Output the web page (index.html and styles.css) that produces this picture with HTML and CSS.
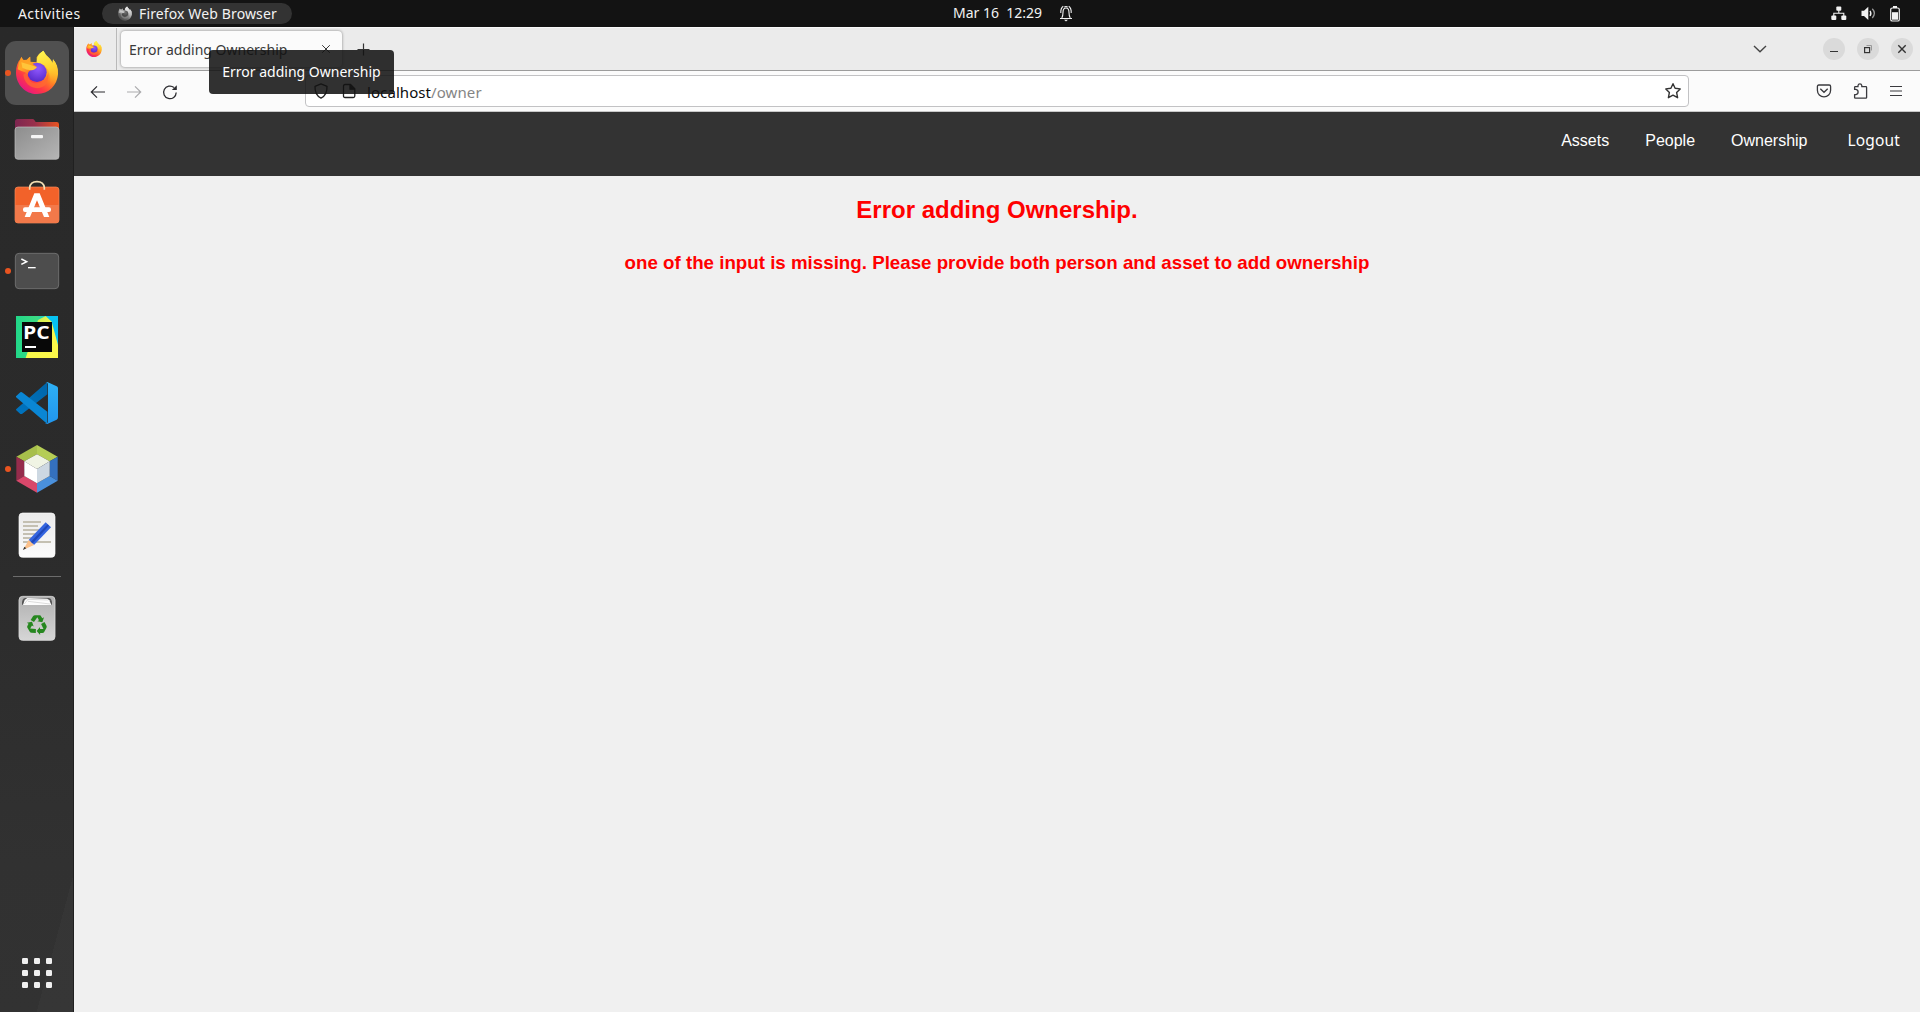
FILE: index.html
```html
<!DOCTYPE html>
<html lang="en">
<head>
<meta charset="utf-8">
<title>Error adding Ownership</title>
<link rel="stylesheet" href="styles.css">
</head>
<body>
<svg class="defs" width="0" height="0" aria-hidden="true">
  <defs>
    <linearGradient id="ffBody" x1="0.85" y1="0.05" x2="0.2" y2="0.95"><stop offset="0" stop-color="#fff44f"/><stop offset=".3" stop-color="#ffc02a"/><stop offset=".52" stop-color="#ff7a25"/><stop offset=".75" stop-color="#ff3647"/><stop offset="1" stop-color="#e31587"/></linearGradient>
    <linearGradient id="ffTail" x1="0.4" y1="0" x2="0.6" y2="1"><stop offset="0" stop-color="#fff44f"/><stop offset=".5" stop-color="#ffd130"/><stop offset="1" stop-color="#ff9a22" stop-opacity="0"/></linearGradient>
    <radialGradient id="ffGlobe" cx=".55" cy=".3" r=".7"><stop offset="0" stop-color="#9059ff"/><stop offset=".5" stop-color="#7542e5"/><stop offset="1" stop-color="#592acb"/></radialGradient>
    <linearGradient id="ffHead" x1="0" y1="0" x2="0.6" y2="1"><stop offset="0" stop-color="#ff9a22"/><stop offset=".6" stop-color="#ffa624"/><stop offset="1" stop-color="#ff6a2a"/></linearGradient>
    <linearGradient id="folderBack" x1="0" y1="0" x2="1" y2="0"><stop offset="0" stop-color="#7d2650"/><stop offset=".45" stop-color="#99304b"/><stop offset="1" stop-color="#e95420"/></linearGradient>
    <linearGradient id="folderFront" x1="0" y1="0" x2="1" y2="1"><stop offset="0" stop-color="#8d8d8d"/><stop offset="1" stop-color="#b5b5b5"/></linearGradient>
    <linearGradient id="pcBg" x1="0" y1="0" x2="1" y2="0"><stop offset="0" stop-color="#21d789"/><stop offset=".5" stop-color="#3ddc83"/><stop offset=".75" stop-color="#07c3f2"/></linearGradient>
    <linearGradient id="pcYellow" x1="0" y1="0" x2="1" y2="1"><stop offset="0" stop-color="#a8e75e"/><stop offset=".5" stop-color="#f7f84a"/><stop offset="1" stop-color="#fcf84a"/></linearGradient>
    <linearGradient id="codeUp" x1="0" y1="1" x2="1" y2="0"><stop offset="0" stop-color="#0074c0"/><stop offset="1" stop-color="#0065a9"/></linearGradient>
    <linearGradient id="codeSide" x1="0" y1="0" x2="0" y2="1"><stop offset="0" stop-color="#2eb0f5"/><stop offset="1" stop-color="#2196ee"/></linearGradient>
    <linearGradient id="paper" x1="0" y1="0" x2="0" y2="1"><stop offset="0" stop-color="#ebebeb"/><stop offset="1" stop-color="#fbfbfb"/></linearGradient>
    <linearGradient id="bin" x1="0" y1="0" x2="0" y2="1"><stop offset="0" stop-color="#b0b0b0"/><stop offset="1" stop-color="#d6d6d6"/></linearGradient>
    <symbol id="firefox" viewBox="47 151 128 131">
      <path fill="url(#ffBody)" d="M48 218 C48 200 53 186 61 178 L64 170 L70 180 L80 179 L90 170 L91 185 L110 187 L110 172 Q116 160 130 152 Q135 163 148 175 Q154 180 157 188 L159 178 Q175 195 174 222 C172 256 146 282 111 282 C76 282 48 253 48 218 Z"/>
      <path fill="url(#ffTail)" d="M110 188 Q110 164 130 152 Q135 163 148 175 Q157 184 159 195 L159 178 Q175 197 173 224 Q170 253 146 263 Q157 240 145 211 Q135 190 110 188 Z"/>
      <circle cx="111" cy="217" r="29" fill="url(#ffGlobe)"/>
      <path fill="#ff6a32" opacity=".75" d="M83 215 Q79 243 105 250 Q135 252 145 219 Q149 260 112 265 Q75 260 70 224 Z"/>
      <path fill="url(#ffHead)" d="M53 208 Q55 188 64 171 Q67 178 71 180 L82 180 Q85 173 91 170 L91 187 Q99 193 110 200 Q106 207 96 209 Q84 213 83 223 Q76 215 66 214 Z"/>
      <path fill="#ffc53a" d="M64 187 Q87 194 111 201 Q106 210 94 211 Q78 209 67 203 Z"/>
    </symbol>
  </defs>
</svg>

<header class="topbar">
  <span class="activities">Activities</span>
  <div class="app-pill">
    <svg class="app-pill-icon" width="14" height="15"><use href="#firefox"/></svg>
    <span>Firefox Web Browser</span>
  </div>
  <div class="clock">
    <span>Mar 16&nbsp; 12:29</span>
    <svg width="14" height="18" viewBox="0 0 14 18" fill="none" stroke="#f2f2f2" stroke-width="1.1"><path d="M1 14.5 H13 M2.8 14 Q4 12 4 8.5 Q4 4 7 4 Q10 4 10 8.5 Q10 12 11.2 14 M1.8 9 Q1.5 4.2 4.3 2.3 M12.2 9 Q12.5 4.2 9.7 2.3"/><path d="M5 15.8 H9 L7 17.6 Z" fill="#f2f2f2" stroke="none"/><path d="M5.3 3.2 Q7 1.8 8.7 3.2" /></svg>
  </div>
  <div class="tray">
    <svg width="16" height="15" viewBox="0 0 16 15" fill="#f2f2f2"><rect x="5.3" y="0.5" width="5" height="4.3" rx="1"/><rect x="0.3" y="9.6" width="5" height="4.3" rx="1"/><rect x="10.3" y="9.6" width="5" height="4.3" rx="1"/><path d="M7.8 4 V7.2 M2.8 10 V7.2 H12.8 V10" fill="none" stroke="#f2f2f2" stroke-width="1.1"/></svg>
    <svg width="16" height="15" viewBox="0 0 16 15" fill="#f2f2f2"><path d="M0.5 4.8 H3 L7.3 0.8 V14 L3 10 H0.5 Z"/><path d="M9 4.8 Q10.8 7.3 9 10" fill="none" stroke="#f2f2f2" stroke-width="1.3"/><path d="M11.3 2.8 Q15.5 7.3 11.3 12" fill="none" stroke="#999" stroke-width="1.3"/></svg>
    <svg width="10" height="16" viewBox="0 0 10 16"><rect x=".7" y="2" width="8.6" height="13" rx="1.6" fill="none" stroke="#f2f2f2" stroke-width="1.2"/><rect x="3" y="0" width="4" height="2" fill="#f2f2f2"/><rect x="2" y="6.2" width="6" height="7.5" fill="#f2f2f2"/></svg>
  </div>
</header>

<div class="desktop">
  <nav class="dock">
    <div class="tile running active"><svg viewBox="15 123 192 192"><use href="#firefox" x="47" y="151" width="128" height="131"/></svg></div>
    <div class="tile"><svg viewBox="15 321 192 192">
      <path d="M45 365 Q45 357 53 357 H98 Q101 357 103 360 L107 366 H170 Q177 366 177 373 V420 H45 Z" fill="url(#folderBack)"/>
      <rect x="45" y="381" width="132" height="97" rx="9" fill="url(#folderFront)" stroke="#c2c2c2" stroke-width="2"/>
      <rect x="93" y="405" width="36" height="10" rx="3" fill="#f5f5f5"/></svg></div>
    <div class="tile"><svg viewBox="15 459 192 192">
      <rect x="45" y="501" width="132" height="108" rx="9" fill="#f2622a" stroke="#f78d5a" stroke-width="2"/>
      <path d="M45 555 H177 V600 Q177 609 168 609 H54 Q45 609 45 600 Z" fill="#f2794a"/>
      <path d="M89 509 V503 Q91 485 111 485 Q131 485 133 503 V509" fill="none" stroke="#f3dfb4" stroke-width="5"/>
      <path d="M103 520 H119 L148 591 H132 L111 541 L90 591 H74 Z" fill="#fff"/>
      <rect x="69" y="562" width="84" height="14" rx="6" fill="#fff"/></svg></div>
    <div class="tile running"><svg viewBox="15 27 192 192">
      <rect x="46" y="70" width="130" height="106" rx="11" fill="#4d4d4d" stroke="#6d6d6d" stroke-width="3"/>
      <path d="M64 87 L80 95 L64 103" fill="none" stroke="#fff" stroke-width="4.5"/><path d="M84 113 H107" stroke="#fff" stroke-width="4"/></svg></div>
    <div class="tile"><svg viewBox="15 225 192 192">
      <rect x="48" y="258" width="126" height="126" fill="url(#pcBg)"/>
      <path d="M114 270 L137 258 L155 275 L174 345 V384 H77 L95 330 Z" fill="url(#pcYellow)"/>
      <rect x="66" y="276" width="90" height="90" fill="#080808"/>
      <text x="69" y="327" class="pc-text" textLength="80" lengthAdjust="spacingAndGlyphs">PC</text>
      <rect x="75" y="348" width="33" height="6" fill="#fff"/></svg></div>
    <div class="tile"><svg viewBox="15 423 192 192">
      <path d="M48 540 L61 552 Q64 553 67 551 L142 493 V456 L50 536 Q47 538 48 540 Z" fill="url(#codeUp)"/>
      <path d="M48 499 L61 487 Q64 485 68 488 L142 545 V582 L50 503 Q47 501 48 499 Z" fill="#0a86d4"/>
      <path d="M142 456 L170 469 Q174 471 174 475 V562 Q174 567 170 569 L142 582 Q138 583 135 579 Q142 583 144 576 V462 Q142 455 136 458 Q139 455 142 456 Z" fill="url(#codeSide)"/></svg></div>
    <div class="tile running"><svg viewBox="15 21 192 192">
      <path d="M111 45 L49 80 L73 94 L111 73 Z" fill="#a7bf4b"/><path d="M111 45 L173 80 L149 94 L111 73 Z" fill="#b5cd55"/>
      <path d="M49 80 V152 L73 138 V94 Z" fill="#952c4c"/><path d="M49 152 L111 188 V160 L73 138 Z" fill="#d9486b"/>
      <path d="M173 80 V152 L149 138 V94 Z" fill="#3470bd"/><path d="M173 152 L111 188 V160 L149 138 Z" fill="#4a90dc"/>
      <path d="M111 73 L149 94 L111 117 L73 94 Z" fill="#f0f4e4"/><path d="M73 94 L111 117 V160 L73 138 Z" fill="#fff"/><path d="M149 94 L111 117 V160 L149 138 Z" fill="#cdd8e2"/></svg></div>
    <div class="tile"><svg viewBox="15 219 192 192">
      <rect x="57" y="249" width="108" height="133" rx="11" fill="url(#paper)" stroke="#fff" stroke-width="2"/>
      <path d="M69 276 H123 M69 288 H114 M69 300 H129 M69 312 H108 M69 324 H102 M69 336 H153" stroke="#c4c0b2" stroke-width="6"/>
      <path d="M86 330 L137 277 L153 292 L102 345 Z" fill="#3465e0"/><path d="M92 336 L143 283 L147 287 L97 341 Z" fill="#1f48b8"/>
      <path d="M86 330 L102 345 L70 359 Z" fill="#fbc08a"/><path d="M73 350 L79 355 L69 360 Z" fill="#333"/></svg></div>
    <hr class="dock-rule">
    <div class="tile"><svg viewBox="15 468 192 192">
      <rect x="57" y="499" width="108" height="132" rx="11" fill="url(#bin)" stroke="#d8d8d8" stroke-width="2.5"/>
      <path d="M66 524 Q65 504 76 504 H146 Q157 504 156 524 Z" fill="#555"/>
      <path d="M69 525 L74 510 L82 504 L142 506 L148 511 L154 525 Z" fill="#fcfcfc"/><path d="M73 522 L84 508 M84 514 L150 522 M82 508 L145 510" stroke="#bbb" stroke-width="1.5"/>
      <g fill="#26871f"><path id="recA" d="M92 570 L99 559 Q101 556 105 556 H119 Q122 556 124 560 L127 565 L132 562 L127 577 L112 574 L117 571 L112 562 L102 576 Z"/>
      <use href="#recA" transform="rotate(120 111 585)"/><use href="#recA" transform="rotate(240 111 585)"/></g></svg></div>
    <div class="tile apps"><svg viewBox="0 0 64 64" fill="#f0f0f0">
      <rect x="17" y="17" width="6" height="6" rx="1.2"/><rect x="29" y="17" width="6" height="6" rx="1.2"/><rect x="41" y="17" width="6" height="6" rx="1.2"/>
      <rect x="17" y="29" width="6" height="6" rx="1.2"/><rect x="29" y="29" width="6" height="6" rx="1.2"/><rect x="41" y="29" width="6" height="6" rx="1.2"/>
      <rect x="17" y="41" width="6" height="6" rx="1.2"/><rect x="29" y="41" width="6" height="6" rx="1.2"/><rect x="41" y="41" width="6" height="6" rx="1.2"/></svg></div>
  </nav>

  <main class="window">
    <div class="tabstrip">
      <div class="pinned"><svg width="16" height="16"><use href="#firefox"/></svg></div>
      <div class="tab">
        <span class="tab-title">Error adding Ownership</span>
        <svg width="10" height="10" viewBox="0 0 10 10" stroke="#3a3a3a"><path d="M1.2 1.2 L8.8 8.8 M8.8 1.2 L1.2 8.8"/></svg>
        <div class="tooltip">Error adding Ownership</div>
      </div>
      <svg class="new-tab" width="13" height="13" viewBox="0 0 13 13" stroke="#333" stroke-width="1.2"><path d="M6.5 .5 V12.5 M.5 6.5 H12.5"/></svg>
      <svg class="tab-list" width="14" height="8" viewBox="0 0 14 8" fill="none" stroke="#444" stroke-width="1.4"><path d="M1 1 L7 6.8 L13 1"/></svg>
      <div class="controls">
        <svg width="22" height="22" viewBox="0 0 22 22"><path d="M7 13.5 H15" stroke="#333"/></svg>
        <svg width="22" height="22" viewBox="0 0 22 22" fill="none"><path d="M9.5 7.5 H14.5 V12.5" stroke="#999"/><rect x="7.6" y="9.6" width="5" height="5" stroke="#333" stroke-width="1.2"/></svg>
        <svg width="22" height="22" viewBox="0 0 22 22"><path d="M7.3 7.3 L14.7 14.7 M14.7 7.3 L7.3 14.7" stroke="#333" stroke-width="1.4"/></svg>
      </div>
    </div>

    <div class="toolbar">
      <div class="history">
        <svg width="16" height="16" viewBox="0 0 16 16" fill="none" stroke="#2c2c30" stroke-width="1.2"><path d="M15 8 H1.5 M7 2.3 L1.3 8 L7 13.7"/></svg>
        <svg width="16" height="16" viewBox="0 0 16 16" fill="none" stroke="#ababad" stroke-width="1.2"><path d="M1 8 H14.5 M9 2.3 L14.7 8 L9 13.7"/></svg>
        <svg width="16" height="16" viewBox="0 0 16 16" fill="none" stroke="#2c2c30" stroke-width="1.3"><path d="M14.2 8.5 A6.3 6.3 0 1 1 12 3.6"/><path d="M14.8 1.2 V6 H9.8 Z" fill="#2c2c30" stroke="none"/></svg>
      </div>
      <div class="urlbar">
        <svg width="16" height="16" viewBox="0 0 16 16" fill="none" stroke="#222" stroke-width="1.3"><path d="M8 .9 L14 3.3 Q14.4 12 8 15.2 Q1.6 12 2 3.3 Z" stroke-linejoin="round"/></svg>
        <svg class="page-icon" width="14" height="16" viewBox="0 0 14 16" fill="none" stroke="#222" stroke-width="1.3"><path d="M3 1.5 H8.5 L12.8 5.8 V13 Q12.8 14.5 11.3 14.5 H3 Q1.5 14.5 1.5 13 V3 Q1.5 1.5 3 1.5 Z"/><path d="M8 1.2 V6.2 H13" fill="#222"/></svg>
        <span class="address">localhost<span class="path">/owner</span></span>
        <svg class="star" width="18" height="18" viewBox="0 0 18 18" fill="none" stroke="#333" stroke-width="1.4" stroke-linejoin="round"><path d="M9 1.7 L11.1 6.2 L16.2 6.9 L12.6 10.4 L13.6 15.7 L9 13.2 L4.4 15.7 L5.4 10.4 L1.8 6.9 L6.9 6.2 Z"/></svg>
      </div>
      <div class="actions">
        <svg width="16" height="16" viewBox="0 0 16 16" fill="none" stroke="#3a3a3e" stroke-width="1.3"><path d="M2.8 2 H13.2 Q14.6 2 14.6 3.4 V7.3 A6.6 6.6 0 0 1 1.4 7.3 V3.4 Q1.4 2 2.8 2 Z"/><path d="M4.3 5.7 L8 9.3 L11.7 5.7"/></svg>
        <svg width="16" height="16" viewBox="0 0 16 16" fill="none" stroke="#3a3a3e" stroke-width="1.3" stroke-linejoin="round"><path d="M1.6 6.4 V4.4 Q1.6 3.7 2.3 3.7 H5 V2.5 Q5.3 .8 6.9 .8 Q8.5 .8 8.8 2.5 V3.7 H12.9 Q13.6 3.7 13.6 4.4 V14.5 Q13.6 15.2 12.9 15.2 H2.3 Q1.6 15.2 1.6 14.5 V11.6 H2.9 Q5.1 11.2 5.1 9 Q5.1 6.8 2.9 6.4 Z"/></svg>
        <svg width="12" height="16" viewBox="0 0 12 16" stroke="#3a3a3e" stroke-width="1.2"><path d="M0 3.5 H12 M0 8 H12 M0 12.5 H12"/></svg>
      </div>
    </div>

    <div class="sitenav">
      <a>Assets</a><a>People</a><a>Ownership</a><a class="logout">Logout</a>
    </div>
    <section class="page">
      <h2>Error adding Ownership.</h2>
      <h3>one of the input is missing. Please provide both person and asset to add ownership</h3>
    </section>
  </main>
</div>
</body>
</html>
```
FILE: styles.css
```css
* { box-sizing: border-box; }
body {
  margin: 0;
  width: 1920px;
  height: 1012px;
  overflow: hidden;
  display: flex;
  flex-direction: column;
  font: 14px/20px "Noto Sans", "Open Sans", sans-serif;
  background: #f0f0f0;
}
svg { display: block; flex: none; }
.defs { position: absolute; }

.topbar {
  height: 27px;
  flex: none;
  display: grid;
  grid-template-columns: 102px 1fr auto 790px;
  align-items: center;
  background: #131313;
  color: #f2f2f2;
}
.activities { padding-left: 18px; letter-spacing: .42px; }
.app-pill {
  width: 190px;
  height: 21px;
  border-radius: 11px;
  background: #333;
  display: flex;
  align-items: center;
  padding-left: 16px;
  gap: 7px;
  white-space: nowrap;
  letter-spacing: .13px;
}
.app-pill-icon { filter: grayscale(1); }
.clock {
  display: flex;
  align-items: center;
  gap: 17px;
  width: 177px;
  padding-bottom: 1px;
  white-space: nowrap;
}
.tray {
  display: flex;
  align-items: center;
  justify-content: flex-end;
  gap: 13.5px;
  padding-right: 20px;
}

.desktop { flex: 1; display: flex; min-height: 0; }
.dock {
  width: 74px;
  flex: none;
  display: flex;
  flex-direction: column;
  align-items: center;
  gap: 2px;
  padding: 14px 0 7px;
  border-right: 1px solid #202020;
  background:
    linear-gradient(105deg, transparent 70%, rgba(255, 255, 255, .02) 70%) 0 100% / 100% 180px no-repeat,
    linear-gradient(#292929, #2b2b2b 50%, #313131 85%, #323232);
}
.tile { width: 64px; height: 64px; flex: none; position: relative; border-radius: 11px; }
.tile svg { width: 64px; height: 64px; }
.active { background: #505050; }
.running::before {
  content: "";
  position: absolute;
  left: 0;
  top: 29px;
  width: 6px;
  height: 6px;
  border-radius: 50%;
  background: #e95420;
}
.pc-text { font: 700 54px "Open Sans", sans-serif; fill: #fff; }
.dock-rule { width: 48px; height: 1px; margin: 7px 0; border: 0; background: #6c6c6c; flex: none; }
.apps { margin-top: auto; }

.window { flex: 1; display: flex; flex-direction: column; min-width: 0; }
.tabstrip {
  height: 44px;
  flex: none;
  display: flex;
  align-items: center;
  background: #ebebeb;
  border-top: 1px solid #f8f8f8;
  border-bottom: 1px solid #9c9c9c;
}
.pinned {
  width: 43px;
  height: 100%;
  display: flex;
  align-items: center;
  padding-left: 12px;
  border-right: 1px solid #b9b9b9;
}
.tab {
  position: relative;
  width: 221px;
  height: 36px;
  margin-left: 4px;
  padding: 0 11px 0 8px;
  display: flex;
  align-items: center;
  justify-content: space-between;
  border-radius: 4px;
  background: #fbfbfb;
  box-shadow: 0 0 3px rgba(0, 0, 0, .45);
  color: #3a3a3a;
  white-space: nowrap;
}
.tab-title { padding-top: 2px; }
.tooltip {
  position: absolute;
  z-index: 5;
  left: 88px;
  top: 19px;
  width: 185px;
  height: 44px;
  border-radius: 4px;
  background: rgba(18, 18, 18, .87);
  color: #fff;
  line-height: 44px;
  text-align: center;
}
.new-tab { margin-left: 15px; }
.tab-list { margin-left: auto; }
.controls { display: flex; gap: 12px; margin: 0 7px 0 56px; }
.controls svg { border-radius: 50%; background: #dadada; }

.toolbar {
  height: 41px;
  flex: none;
  display: flex;
  align-items: center;
  background: #fbfbfb;
  border-bottom: 1px solid #c8c8c8;
}
.history { display: flex; gap: 20px; width: 231px; padding: 1px 0 0 16px; }
.urlbar {
  width: 1384px;
  height: 32px;
  display: flex;
  align-items: center;
  padding: 0 6px 0 7px;
  border: 1px solid #c2c2c4;
  border-radius: 4px;
  background: #fff;
  color: #0c0c0d;
}
.page-icon { margin-left: 13px; }
.address { margin-left: 11px; padding-top: 1px; font-size: 15px; letter-spacing: .08px; }
.path { color: #858585; }
.star { margin-left: auto; }
.actions { flex: 1; display: flex; align-items: center; justify-content: flex-end; gap: 21px; padding-right: 18px; }

.sitenav {
  height: 64px;
  flex: none;
  display: flex;
  justify-content: flex-end;
  gap: 36px;
  padding: 20px 20px 0 0;
  background: #333;
  color: #fff;
  font: 16px/18px "Liberation Sans", Arial, sans-serif;
}
.logout { margin: -1px 0 0 4px; font: 15.5px/18px "Noto Sans", sans-serif; letter-spacing: .15px; }
.page {
  flex: 1;
  display: flow-root;
  background: #f0f0f0;
  color: #f00;
  text-align: center;
  font-family: "Liberation Sans", Arial, sans-serif;
}
h2 { margin: 20px 0 29px; font-size: 24px; line-height: 27px; }
h3 { margin: 0; font-size: 18.72px; line-height: 21px; letter-spacing: .01px; }
```
